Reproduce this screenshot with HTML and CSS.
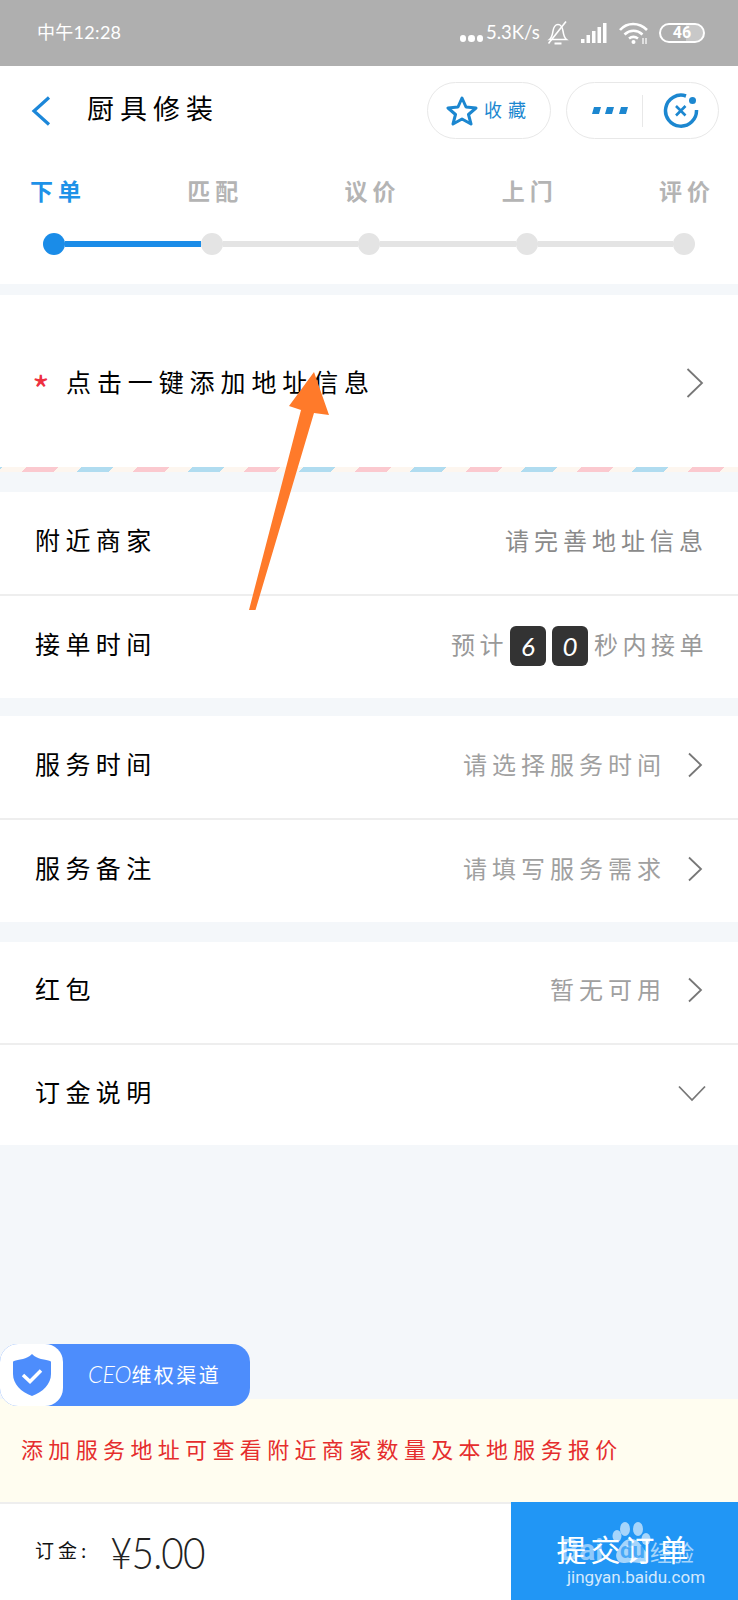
FILE: index.html
```html
<!DOCTYPE html>
<html lang="zh">
<head>
<meta charset="utf-8">
<title>厨具修装</title>
<link rel="stylesheet" href="styles.css">
</head>
<body>
<div class="page">
  <div class="status">
    <span class="clock">中午12:28</span>
    <div class="status-right">
      <span class="net-dots"><i></i><i></i><i></i></span>
      <span class="speed">5.3K/s</span>
      <svg class="ic-bell" width="22" height="24" viewBox="0 0 22 24" fill="none" stroke="#fff" stroke-width="1.600"><path d="M2.500 18.500c2.500-2 3-5 3.500-8.500S8.500 3.500 11 3.500 15.500 6.500 16 10s1 6.500 3.500 8.500z"/><path d="M7.500 22.500h7" stroke-width="2"/><path d="M1.500 22.500 19 .5"/></svg>
      <svg class="ic-signal" width="26" height="20" viewBox="0 0 26 20" fill="#fff"><rect x="0" y="16" width="3.500" height="4"/><rect x="5.500" y="12" width="3.500" height="8"/><rect x="11" y="8" width="3.500" height="12"/><rect x="16.500" y="4" width="3.500" height="16"/><rect x="22" y="0" width="3.500" height="20"/></svg>
      <svg class="ic-wifi" width="29" height="22" viewBox="0 0 29 22" fill="none" stroke="#fff" stroke-width="2.600"><path d="M1 8C8 0 20 0 28 8"/><path d="M5.500 12.500c5.500-5 12.500-5 18 0"/><path d="M10 16.500c2.800-2.200 6-2.200 9 0"/><circle cx="14.500" cy="20" r="2" fill="#fff" stroke="none"/><path d="M24 16v6M27 16v6" stroke-width="1.200"/></svg>
      <span class="battery">46</span>
    </div>
  </div>

  <header class="topbar">
    <svg class="back" width="20" height="30" viewBox="0 0 20 30" fill="none" stroke="#1c87d9" stroke-width="3.200"><path d="M18 1.500 3 15l15 13.500"/></svg>
    <h1 class="title">厨具修装</h1>
    <div class="pill pill-fav">
      <svg width="32" height="30" viewBox="0 0 32 30" fill="none" stroke="#1c87d0" stroke-width="3" stroke-linejoin="round"><path d="M16 2l4 9 10 1-7.500 6.500 2.500 9.500-9-5-9 5 2.500-9.500L2 12l10-1z"/></svg>
      <span class="fav-text">收藏</span>
    </div>
    <div class="pill pill-menu">
      <svg class="more" width="36" height="7" viewBox="0 0 36 7" fill="#1c87d0"><path d="M2 0h7L7 7H0zM15 0h7l-2 7h-7zM29 0h7l-2 7h-7z"/></svg>
      <span class="pill-sep"></span>
      <svg class="closer" width="36" height="36" viewBox="0 0 36 36" fill="none" stroke="#1c87d0"><path d="M23 3A15.500 15.500 0 1 0 33.500 17" stroke-width="3.500"/><path d="M13 13l9.500 9.500M22.500 13 13 22.500" stroke-width="2.600"/><circle cx="29.500" cy="7.500" r="3.500" fill="#1c87d0" stroke="none"/></svg>
    </div>
  </header>

  <section class="steps">
    <div class="step-labels">
      <span class="step-label step-on">下单</span>
      <span class="step-label">匹配</span>
      <span class="step-label">议价</span>
      <span class="step-label">上门</span>
      <span class="step-label">评价</span>
    </div>
    <div class="track">
      <i class="dot dot-on"></i><i class="seg seg-on"></i>
      <i class="dot"></i><i class="seg"></i>
      <i class="dot"></i><i class="seg"></i>
      <i class="dot"></i><i class="seg"></i>
      <i class="dot"></i>
    </div>
  </section>

  <section class="address">
    <span class="req">*</span>
    <span class="addr-text">点击一键添加地址信息</span>
    <svg class="chev-lg" width="18" height="30" viewBox="0 0 18 30" fill="none" stroke="#777" stroke-width="1.800"><path d="M1.500 1 16 15 1.500 29"/></svg>
  </section>
  <div class="airmail"></div>

  <section class="card card-a">
    <div class="row">
      <span class="row-label">附近商家</span>
      <span class="row-value">请完善地址信息</span>
    </div>
    <div class="row">
      <span class="row-label">接单时间</span>
      <span class="row-value row-timer">预计<b class="digit">6</b><b class="digit">0</b>秒内接单</span>
    </div>
  </section>

  <section class="card card-b">
    <div class="row">
      <span class="row-label">服务时间</span>
      <span class="row-value row-link">请选择服务时间<svg class="chev" width="16" height="26" viewBox="0 0 16 26" fill="none" stroke="#777" stroke-width="1.800"><path d="M2 1.500 14 13 2 24.500"/></svg></span>
    </div>
    <div class="row">
      <span class="row-label">服务备注</span>
      <span class="row-value row-link">请填写服务需求<svg class="chev" width="16" height="26" viewBox="0 0 16 26" fill="none" stroke="#777" stroke-width="1.800"><path d="M2 1.500 14 13 2 24.500"/></svg></span>
    </div>
  </section>

  <section class="card card-c">
    <div class="row">
      <span class="row-label">红包</span>
      <span class="row-value row-link">暂无可用<svg class="chev" width="16" height="26" viewBox="0 0 16 26" fill="none" stroke="#777" stroke-width="1.800"><path d="M2 1.500 14 13 2 24.500"/></svg></span>
    </div>
    <div class="row">
      <span class="row-label">订金说明</span>
      <svg class="chev-down" width="28" height="17" viewBox="0 0 28 17" fill="none" stroke="#777" stroke-width="1.800"><path d="M1 1.500 14 15 27 1.500"/></svg>
    </div>
  </section>

  <div class="spacer"></div>

  <div class="tip">添加服务地址可查看附近商家数量及本地服务报价</div>

  <footer class="footer">
    <span class="deposit-label">订金:</span>
    <span class="deposit-price">¥5.00</span>
    <div class="submit">提交订单</div>
  </footer>

  <div class="ceo">
    <span class="ceo-badge">
      <svg width="38" height="42" viewBox="0 0 38 42"><path d="M19 0c3 3 6 4 9 5 4 1 7 1 9 2 1 0 1 1 1 2v11c0 10-8 18-19 22C8 38 0 30 0 20V9c0-1 0-2 1-2 2-1 5-1 9-2 3-1 6-2 9-5z" fill="#4d8dfc"/><path d="M10 21l7 6.500 11-11" fill="none" stroke="#fff" stroke-width="3.500"/></svg>
    </span>
    <span class="ceo-text"><em class="ceo-latin">CEO</em>维权渠道</span>
  </div>

  <svg class="arrow" width="90" height="250" viewBox="0 0 90 250"><path d="M66 6 81 49 66 47 7.500 244 1 244 53 44 41 40z" fill="#ff7a2a"/></svg>

  <div class="mark">
    <svg class="mark-paw" width="46" height="46" viewBox="0 0 46 46" fill="#fff"><ellipse cx="15" cy="9" rx="5" ry="7"/><ellipse cx="28" cy="9" rx="5" ry="7"/><ellipse cx="7" cy="16" rx="4.500" ry="6"/><ellipse cx="36" cy="19" rx="4.500" ry="6"/><path d="M21 19c8 0 11 8 15 13 4 6-1 12-7 11-5-1-9-1-14 0-6 1-11-5-8-11 3-5 6-13 14-13z"/></svg>
    <span class="mark-bai">Bai</span><span class="mark-du">du</span><span class="mark-jy">经验</span>
    <span class="mark-url">jingyan.baidu.com</span>
  </div>
</div>
</body>
</html>
```
FILE: styles.css
```css
* { box-sizing: border-box; }
html, body { margin: 0; padding: 0; }
body {
  font-family: "Noto Sans CJK SC", "Noto Sans", sans-serif;
  background: #f4f7fa;
}
.page {
  position: relative;
  width: 738px;
  height: 1600px;
  display: flex;
  flex-direction: column;
  overflow: hidden;
  background: #f4f7fa;
}

/* status bar */
.status {
  height: 66px;
  flex: none;
  background: #afafaf;
  color: #fff;
  display: flex;
  align-items: center;
  justify-content: space-between;
  padding: 0 33px 0 37px;
}
.clock { font: 400 18px "Lato", "Noto Sans CJK SC", sans-serif; letter-spacing: .3px; margin-top: -4px; }
.status-right { display: flex; align-items: center; }
.net-dots { display: flex; gap: 2px; margin-top: 11px; }
.net-dots i { width: 6.500px; height: 6.500px; border-radius: 50%; background: #fff; }
.speed { font: 400 18.500px "Lato", sans-serif; margin-left: 3px; width: 57px; margin-top: -3px; }
.ic-bell { margin-left: 4px; }
.ic-signal { margin-left: 12px; }
.ic-wifi { margin-left: 12px; }
.battery {
  margin-left: 11px;
  width: 46px;
  height: 20px;
  border: 2px solid #fff;
  border-radius: 10px;
  background: linear-gradient(90deg, #afafaf 60%, #c8c8c8 60%);
  font: 700 16px/16px "Roboto", sans-serif;
  text-align: center;
}

/* top bar */
.topbar {
  flex: none;
  height: 73px;
  background: #fff;
  display: flex;
  align-items: flex-start;
  padding: 16px 19px 0 31px;
}
.back { margin-top: 14px; }
.title {
  margin: 6px auto 0 36px;
  font-size: 27px;
  line-height: 40px;
  font-weight: 400;
  letter-spacing: 6px;
  color: #000;
}
.pill {
  height: 57px;
  border: 1px solid #e8e8e8;
  border-radius: 29px;
  display: flex;
  align-items: center;
  background: #fff;
}
.pill-fav { width: 124px; padding-left: 18px; }
.fav-text { margin: -4px 0 0 6px; font-size: 18px; letter-spacing: 6px; color: #1c87d0; }
.pill-menu { width: 153px; margin-left: 15px; padding-left: 25px; }
.pill-sep { width: 1px; height: 32px; background: #e8e8e8; margin: 0 20px 0 14px; }

/* steps */
.steps { flex: none; height: 145px; background: #fff; padding-top: 35px; }
.step-labels { display: flex; justify-content: space-between; padding: 0 26px 0 30px; height: 32px; }
.step-label { width: 53px; font-size: 23px; line-height: 32px; letter-spacing: 5px; font-weight: 700; color: #b4b4b4; white-space: nowrap; }
.step-on { color: #1e92e8; }
.track { display: flex; align-items: center; padding: 0 43px; margin-top: 27px; }
.dot { flex: none; width: 22px; height: 22px; border-radius: 50%; background: #e4e4e4; }
.dot-on { background: #1a8ce8; }
.seg { flex: 1; height: 6px; background: #e4e4e4; }
.seg-on { background: #1a8ce8; }

/* address */
.address {
  flex: none;
  margin-top: 11px;
  height: 172px;
  background: #fff;
  display: flex;
  align-items: center;
  padding: 4px 34px 0 32px;
}
.req { width: 34px; font-size: 38px; line-height: 30px; height: 22px; margin-top: 4px; color: #ee3040; }
.addr-text { flex: 1; font-size: 25px; letter-spacing: 5.900px; color: #000; margin-top: -4px; }
.airmail {
  flex: none;
  height: 5px;
  background: repeating-linear-gradient(135deg,
    #fbc9cf 18.400px 41.400px, #fdf6ef 41.400px 57.300px,
    #b0dcf0 57.300px 80.300px, #fdf6ef 80.300px 96.900px);
}

/* cards */
.card { flex: none; background: #fff; display: flex; flex-direction: column; }
.card-a { margin-top: 20px; height: 206px; }
.card-b { margin-top: 18px; height: 206px; }
.card-c { margin-top: 20px; height: 203px; }
.row {
  flex: 1;
  display: flex;
  align-items: center;
  justify-content: space-between;
  padding: 0 35px 8px 35px;
}
.row + .row { border-top: 2px solid #eeeeee; }
.row-label { font-size: 25px; letter-spacing: 5.400px; color: #000; }
.row-value { display: flex; align-items: center; font-size: 24px; letter-spacing: 5px; color: #8a8a8a; margin-right: -5px; }
.row-link { color: #a0a0a0; margin-right: 0; }
.row-timer { letter-spacing: 4.500px; color: #999; }
.chev { margin: 4px 0 0 21px; }
.digit {
  flex: none;
  width: 36px;
  height: 40px;
  background: #333;
  border-radius: 6px;
  color: #fff;
  font: italic 400 26px/40px "Lato", sans-serif;
  letter-spacing: 0;
  text-align: center;
  margin: 6px 6px 0 2px;
}
.digit + .digit { margin-left: 0; }
.chev-down { margin: 6px -3px 0 0; }

.spacer { flex: 1; }

/* tip */
.tip {
  flex: none;
  height: 103px;
  background: #fffdf0;
  display: flex;
  align-items: center;
  padding: 0 0 6px 21px;
  font-size: 22px;
  letter-spacing: 5.350px;
  color: #e52d2d;
}

/* footer */
.footer {
  flex: none;
  height: 98px;
  background: #fff;
  border-top: 2px solid #eeeeee;
  display: flex;
  align-items: center;
  padding-left: 35px;
}
.deposit-label { font-size: 19px; letter-spacing: 4px; color: #111; margin-top: -5px; }
.deposit-price {
  margin-left: 20px;
  font: 300 44px "Lato", sans-serif;
  letter-spacing: -1px;
  color: #222;
  transform: scaleX(.88);
  transform-origin: left center;
}
.submit {
  margin-left: auto;
  align-self: stretch;
  margin-top: -2px;
  width: 227px;
  background: #2196f5;
  color: #fff;
  font-size: 30px;
  letter-spacing: 4px;
  display: flex;
  align-items: flex-start;
  justify-content: center;
  padding: 26px 0 0;
  line-height: 40px;
}

/* overlays */
.ceo {
  position: absolute;
  left: 0;
  top: 1344px;
  width: 250px;
  height: 62px;
  display: flex;
  align-items: center;
  background: #4d8dfc;
  border-radius: 18px;
}
.ceo-badge {
  flex: none;
  width: 63px;
  height: 62px;
  background: #fff;
  border-radius: 18px;
  display: flex;
  align-items: center;
  justify-content: center;
}
.ceo-text { margin-left: 25px; font-size: 20px; letter-spacing: 2.400px; color: #fff; white-space: nowrap; margin-top: -2px; }
.ceo-latin { font: italic 300 23px "Lato", sans-serif; letter-spacing: 0; }
.arrow { position: absolute; left: 248px; top: 366px; }
.mark { position: absolute; left: 540px; top: 1518px; width: 180px; height: 70px; color: #fff; }
.mark-paw { position: absolute; left: 70px; top: 2px; opacity: .6; }
.mark-bai { position: absolute; left: 20px; top: 17px; font: 700 30px/30px "Roboto", sans-serif; opacity: .5; }
.mark-du { position: absolute; left: 80px; top: 20px; font: 700 22px/26px "Roboto", sans-serif; color: #2196f5; opacity: .7; }
.mark-jy { position: absolute; left: 110px; top: 18px; font-size: 22px; line-height: 30px; opacity: .6; }
.mark-url { position: absolute; left: 27px; top: 49px; font: 400 17px/20px "Roboto", sans-serif; opacity: .8; white-space: nowrap; }
```
